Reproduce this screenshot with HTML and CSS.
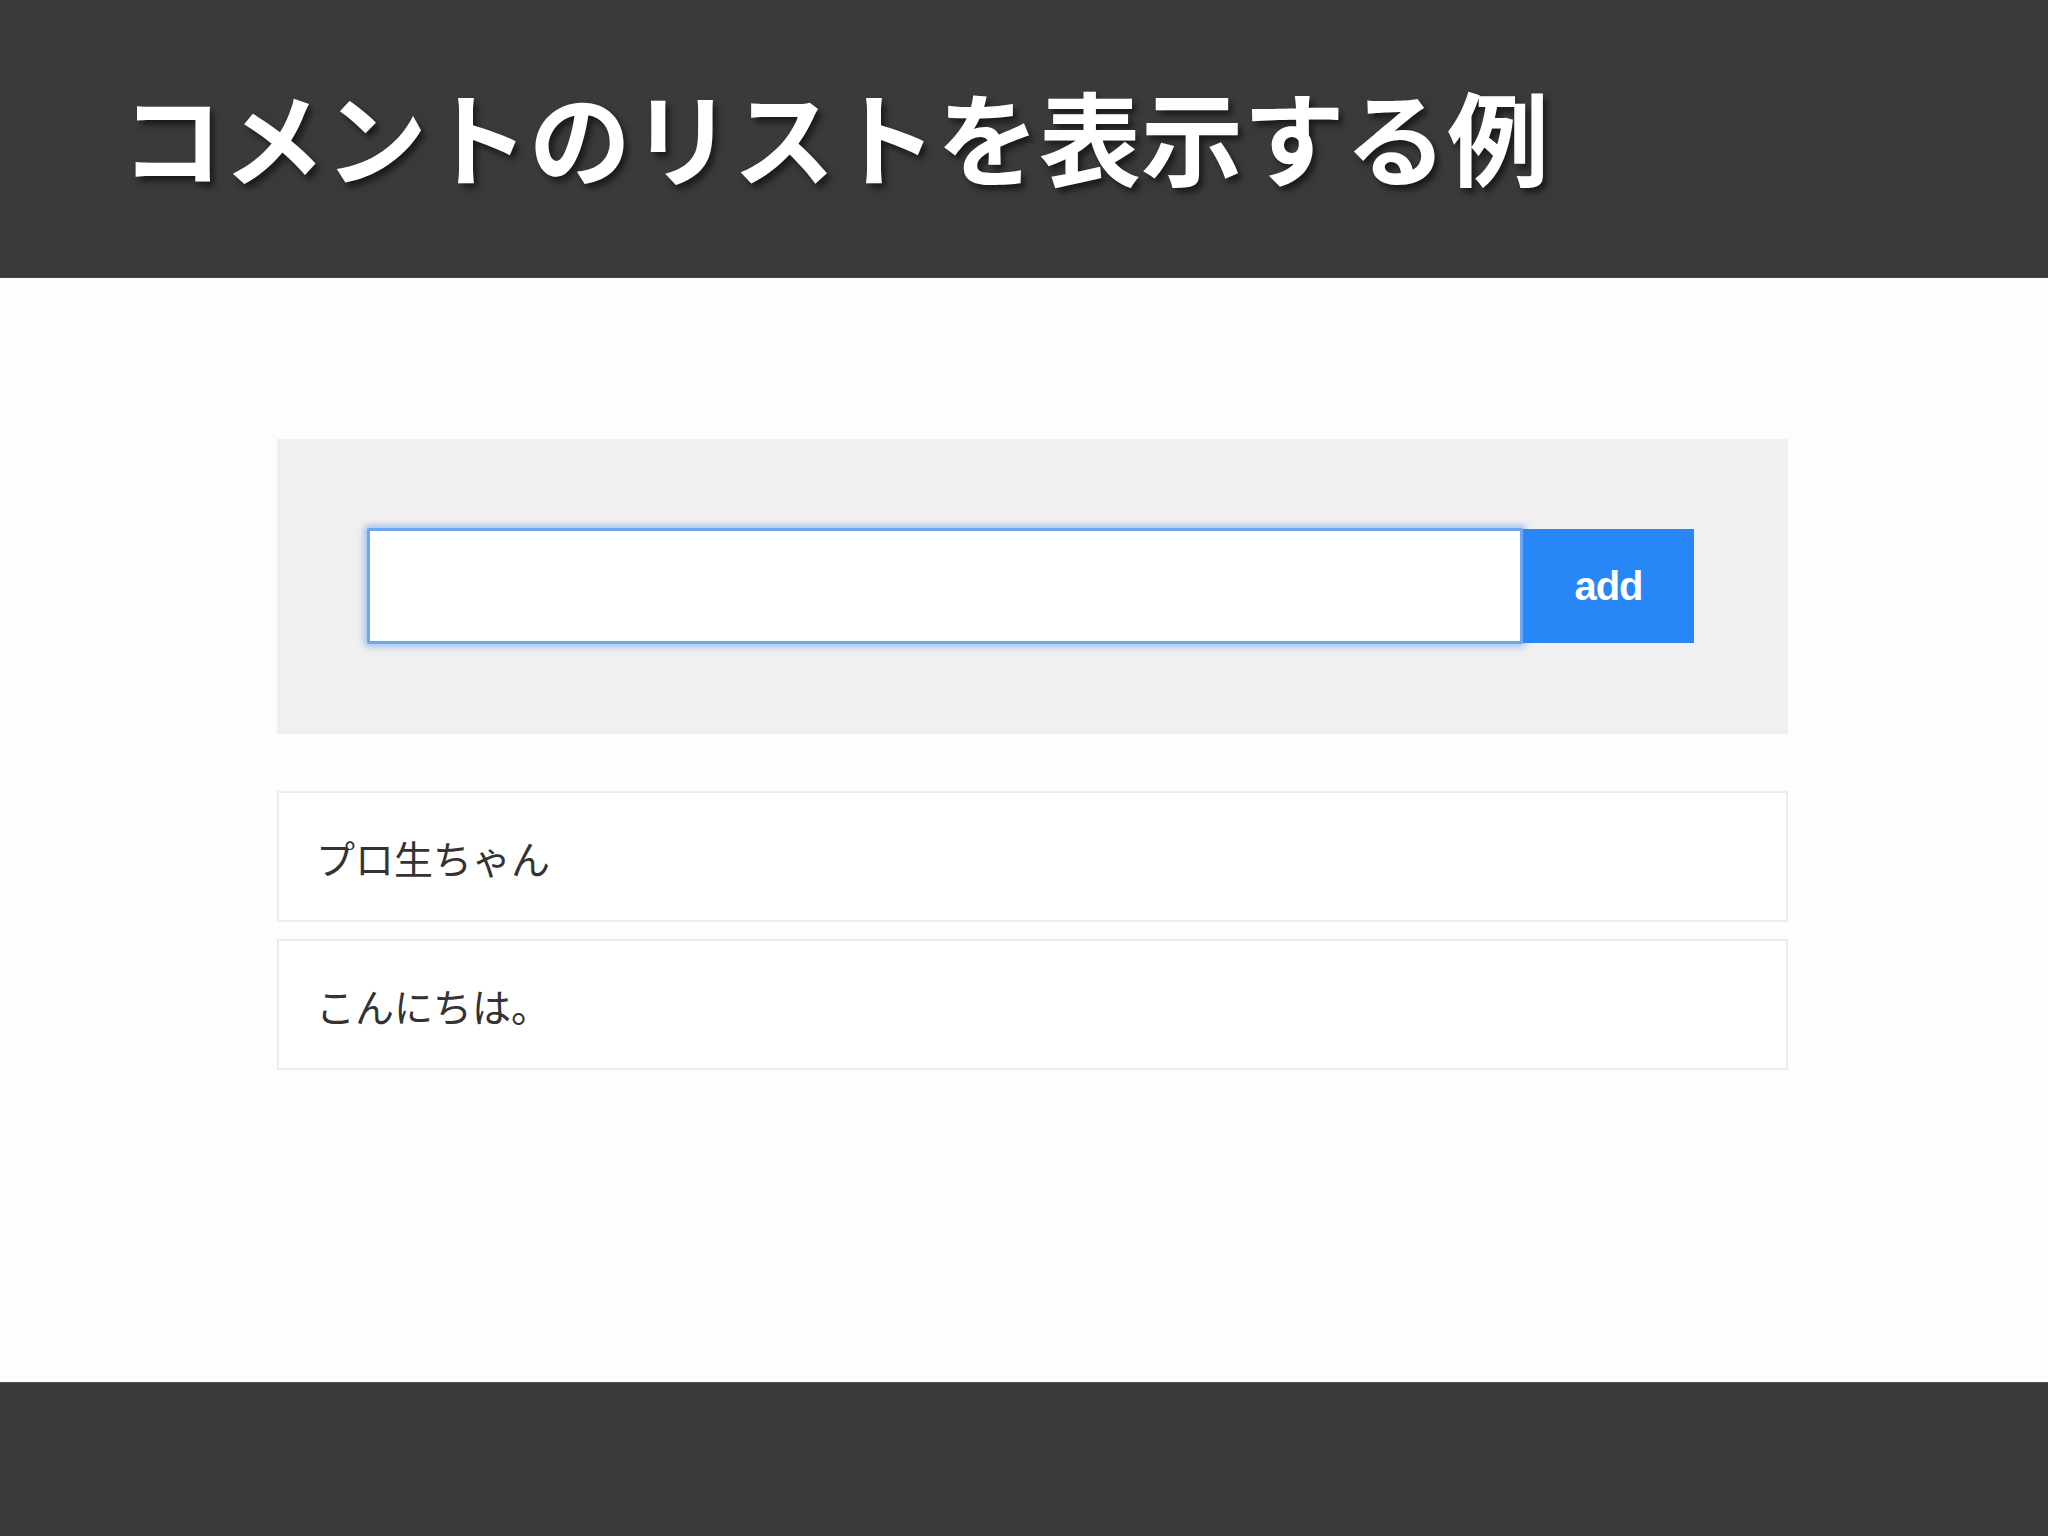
FILE: index.html
```html
<!DOCTYPE html>
<html lang="ja">

<head>
    <meta charset="UTF-8">
    <title>コメントのリストを表示する例</title>
    <link rel="stylesheet" href="styles.css">
</head>
<body>
    <header class="slide-header">
        <h1 class="slide-title">コメントのリストを表示する例</h1>
    </header>

    <main class="slide-body">
        <div class="demo">
            <form class="comment-form" onsubmit="return false">
                <input class="comment-input" type="text">
                <button class="comment-add" type="submit">add</button>
            </form>
            <ul class="comment-list">
                <li class="comment">プロ生ちゃん</li>
                <li class="comment">こんにちは。</li>
            </ul>
        </div>
    </main>

    <footer class="slide-footer"></footer>
</body>

</html>
```

FILE: styles.css
```css
html, body {
    height: 100%;
}

body {
    margin: 0;
    display: flex;
    flex-direction: column;
    background: #fdfdfd;
    font-family: "Noto Sans CJK JP", "Noto Sans", sans-serif;
}

.slide-header {
    height: 278px;
    flex-shrink: 0;
    display: flex;
    align-items: center;
    padding: 0 0 8px 121px;
    background: #3a3a3a;
    border-bottom: 1px solid #4a4a4a;
    box-sizing: border-box;
}

.slide-title {
    margin: 0;
    color: #fff;
    font-size: 102px;
    font-weight: 700;
    line-height: 1;
    text-shadow: 4px 5px 6px rgba(0, 0, 0, 0.55);
}

.slide-body {
    flex: 1;
}

.demo {
    width: 1511px;
    margin: 161px 0 0 277px;
}

.comment-form {
    display: flex;
    align-items: center;
    padding: 89px 94px 90px 90px;
    background: #f0f0f0;
}

.comment-input {
    flex: 1;
    height: 116px;
    margin: 0;
    box-sizing: border-box;
    border: 3px solid #6fa7ef;
    border-radius: 2px;
    background: #fff;
    box-shadow: 0 0 6px 3px rgba(90, 150, 235, 0.5);
    outline: none;
}

.comment-add {
    width: 171px;
    height: 114px;
    margin: 0;
    border: none;
    background: #2787f7;
    color: #fff;
    font-family: "Liberation Sans", Arial, sans-serif;
    font-size: 40px;
    font-weight: 700;
    letter-spacing: -1px;
    cursor: pointer;
}

.comment-list {
    list-style: none;
    margin: 57px 0 0;
    padding: 0;
}

.comment {
    height: 131px;
    display: flex;
    align-items: center;
    box-sizing: border-box;
    padding-left: 37px;
    margin-bottom: 17px;
    border: 2px solid #ececec;
    background: #fff;
    color: #333;
    font-size: 39px;
    font-weight: 400;
}

.slide-footer {
    height: 154px;
    flex-shrink: 0;
    background: #3b393b;
    border-top: 1px solid #555356;
    box-sizing: border-box;
}
```
